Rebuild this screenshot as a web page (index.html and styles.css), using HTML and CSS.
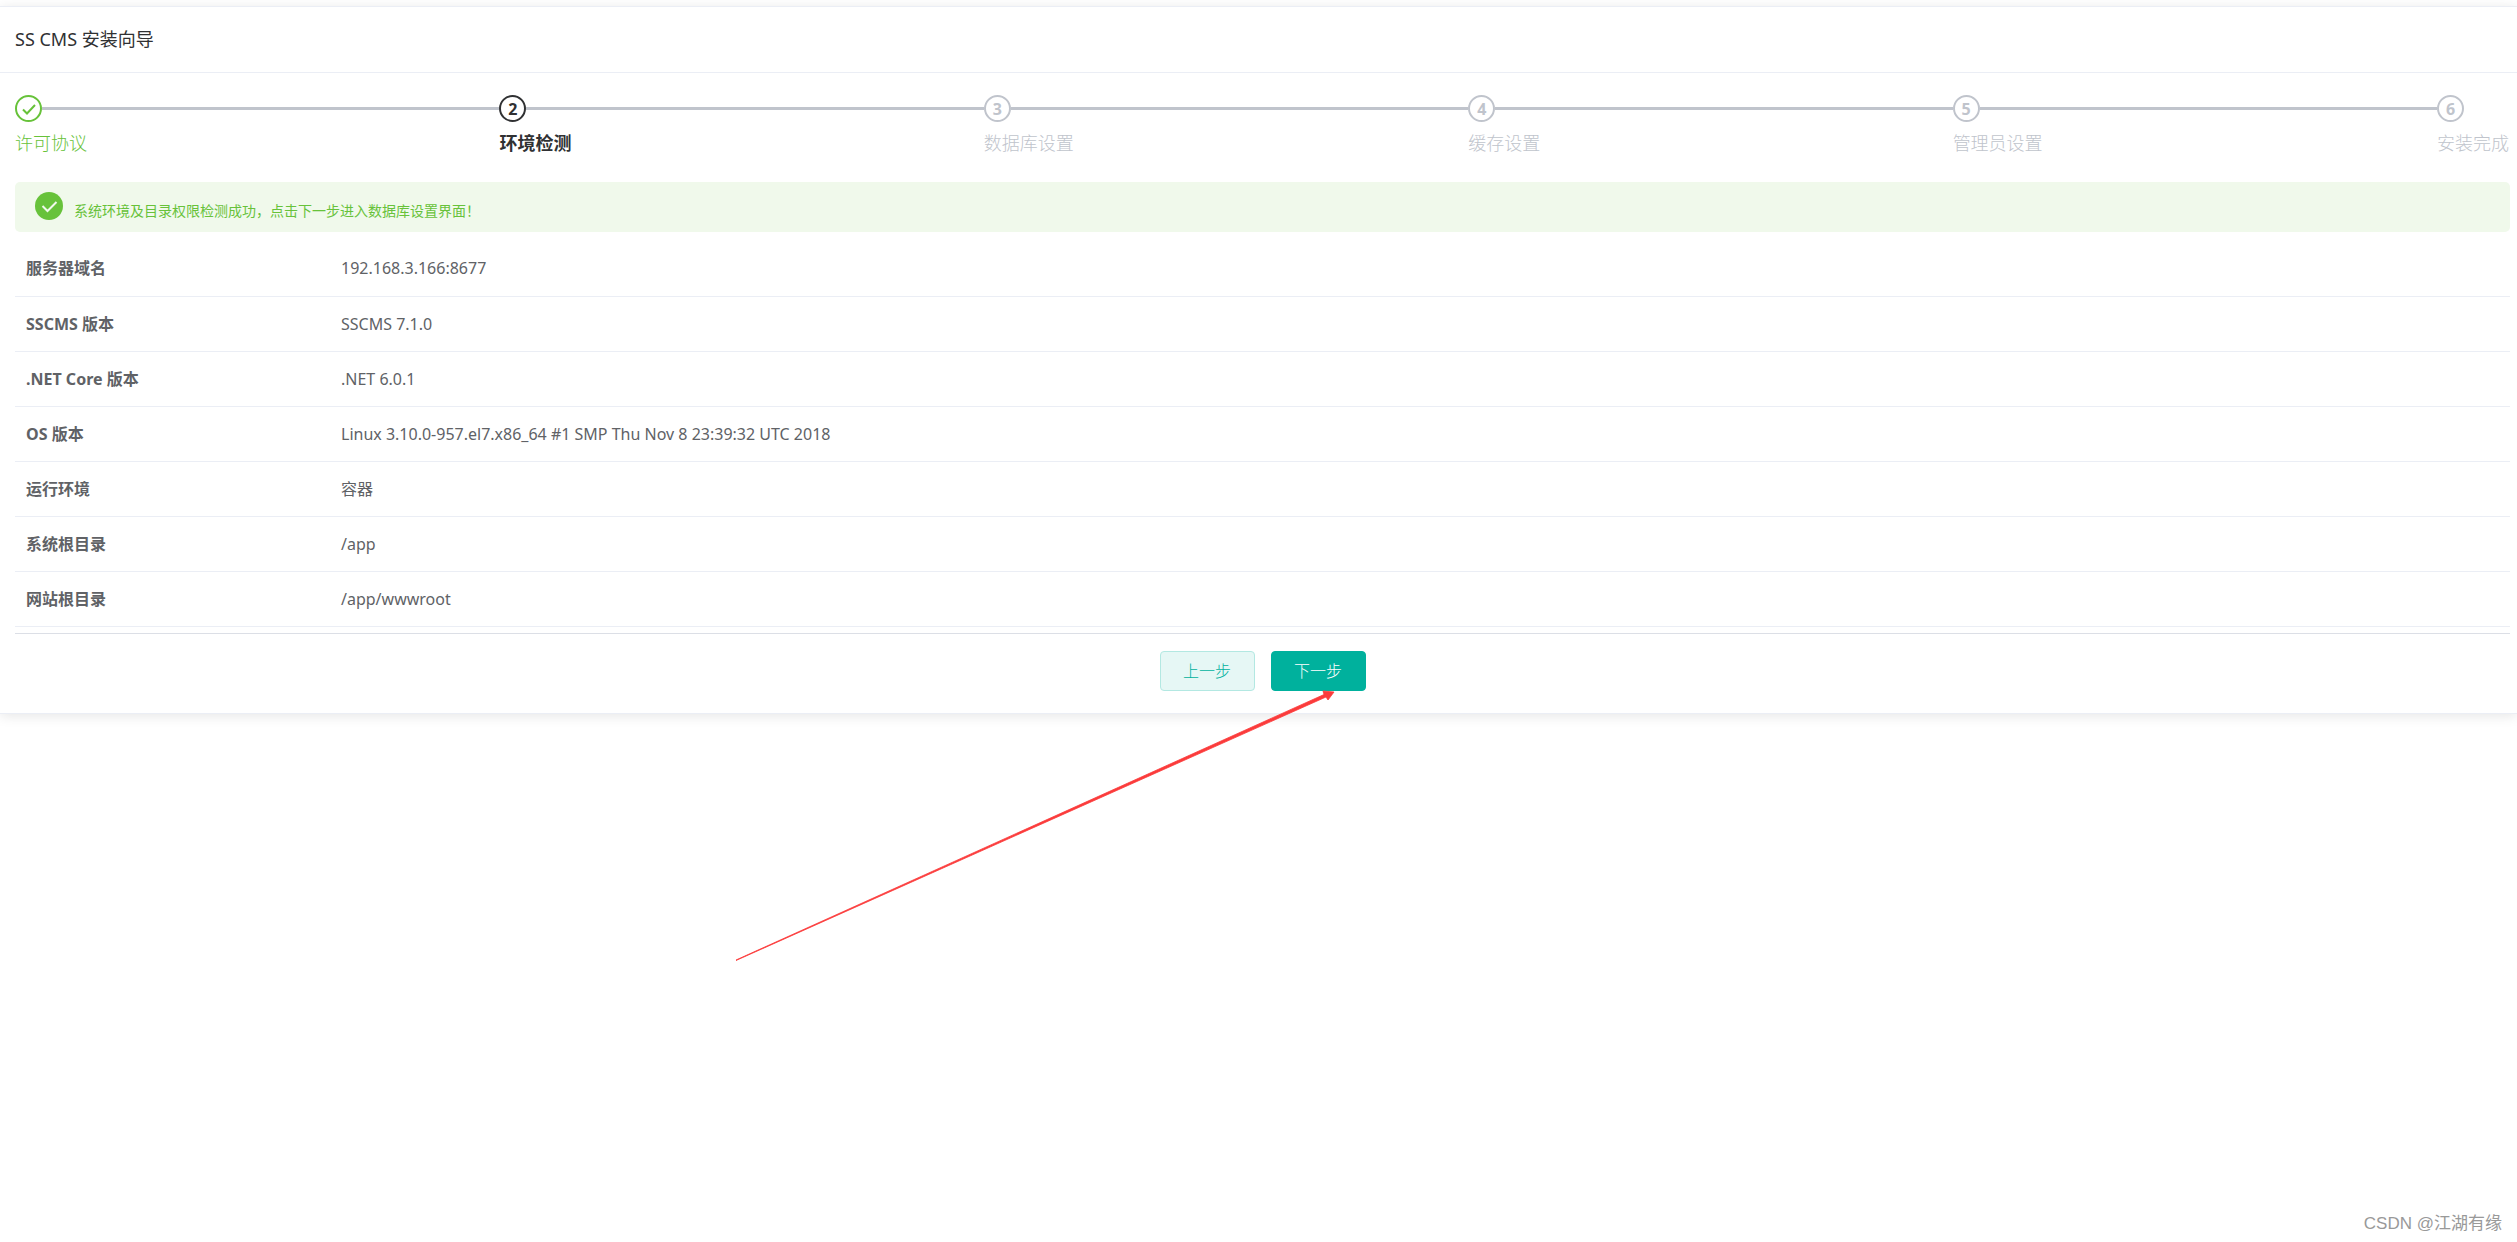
FILE: index.html
```html
<!DOCTYPE html>
<html lang="zh-CN">
<head>
<meta charset="utf-8">
<meta name="viewport" content="width=device-width, initial-scale=1">
<title>SS CMS 安装向导</title>
<link rel="stylesheet" href="styles.css">
</head>
<body>
<main class="card">
  <header class="card-header"><h1 class="card-title">SS CMS 安装向导</h1></header>
  <div class="card-body">
    <ol class="steps">
      <li class="step is-success">
        <div class="step-head"><span class="step-icon"><svg viewBox="0 0 24 24" width="24" height="24" aria-hidden="true"><path d="M6 12.500 10 16.500 18 8" fill="none" stroke="currentColor" stroke-width="2"/></svg></span></div>
        <div class="step-title">许可协议</div>
      </li>
      <li class="step is-process">
        <div class="step-head"><span class="step-icon">2</span></div>
        <div class="step-title">环境检测</div>
      </li>
      <li class="step">
        <div class="step-head"><span class="step-icon">3</span></div>
        <div class="step-title">数据库设置</div>
      </li>
      <li class="step">
        <div class="step-head"><span class="step-icon">4</span></div>
        <div class="step-title">缓存设置</div>
      </li>
      <li class="step">
        <div class="step-head"><span class="step-icon">5</span></div>
        <div class="step-title">管理员设置</div>
      </li>
      <li class="step">
        <div class="step-head"><span class="step-icon">6</span></div>
        <div class="step-title">安装完成</div>
      </li>
    </ol>

    <div class="alert" role="status">
      <svg class="alert-icon" viewBox="0 0 28 28" width="28" height="28" aria-hidden="true"><circle cx="14" cy="14" r="14" fill="currentColor"/><path d="M7.500 14 12.500 19 21.500 10" fill="none" stroke="#f0f9eb" stroke-width="2"/></svg>
      <p class="alert-text">系统环境及目录权限检测成功，点击下一步进入数据库设置界面！</p>
    </div>

    <table class="info">
      <tbody>
        <tr><th scope="row">服务器域名</th><td>192.168.3.166:8677</td></tr>
        <tr><th scope="row">SSCMS 版本</th><td>SSCMS 7.1.0</td></tr>
        <tr><th scope="row">.NET Core 版本</th><td>.NET 6.0.1</td></tr>
        <tr><th scope="row">OS 版本</th><td>Linux 3.10.0-957.el7.x86_64 #1 SMP Thu Nov 8 23:39:32 UTC 2018</td></tr>
        <tr><th scope="row">运行环境</th><td>容器</td></tr>
        <tr><th scope="row">系统根目录</th><td>/app</td></tr>
        <tr><th scope="row">网站根目录</th><td>/app/wwwroot</td></tr>
      </tbody>
    </table>

    <div class="actions">
      <button type="button" class="btn btn-plain">上一步</button>
      <button type="button" class="btn btn-primary">下一步</button>
    </div>
  </div>
</main>

<svg class="arrow" width="600" height="274" viewBox="0 0 600 274" aria-hidden="true">
  <path d="M0 272 588 6.500 587 3 598 4 592 12 590 9 0 272.500Z" fill="#fb3b3b" stroke="#fb3b3b" stroke-width="0.800" stroke-linejoin="round"/>
</svg>
<div class="watermark">CSDN @江湖有缘</div>
</body>
</html>
```

FILE: styles.css
```css
* {
  box-sizing: border-box;
}

body {
  position: relative;
  min-height: 100vh;
  margin: 0;
  padding-top: 6px;
  overflow-x: hidden;
  background: #fff;
  color: #303133;
  font-family: "Noto Sans", "Noto Sans CJK SC", sans-serif;
  font-size: 16px;
  line-height: 24px;
}

.card {
  border-top: 1px solid #ebeef5;
  border-bottom: 1px solid #ebeef5;
  background: #fff;
  box-shadow: 0 2px 12px rgba(0, 0, 0, 0.1);
}

.card-header {
  padding: 20px 15px;
  border-bottom: 1px solid #ebeef5;
}

.card-title {
  margin: 0;
  font-size: 18px;
  font-weight: 400;
  line-height: 25px;
}

.card-body {
  padding: 22px 7px 22px 15px;
}

.steps {
  display: flex;
  margin: 0;
  padding: 0;
  list-style: none;
}

.step {
  flex: 1;
  color: #c0c4cc;
}

.step:last-child {
  flex: none;
  min-width: 73px;
}

.step-head {
  display: flex;
  align-items: center;
}

.step:not(:last-child) .step-head::after {
  content: "";
  flex: 1;
  height: 3px;
  background: #c0c4cc;
}

.step-icon {
  display: flex;
  align-items: center;
  justify-content: center;
  width: 27px;
  height: 27px;
  border: 2px solid currentColor;
  border-radius: 50%;
  background: #fff;
  font-weight: 700;
  line-height: 20px;
}

.step-icon svg {
  flex: none;
}

.step-title {
  margin-top: 2px;
  font-size: 18px;
  font-weight: 300;
  line-height: 38px;
}

.is-success {
  color: #67c23a;
}

.is-process {
  color: #303133;
}

.is-process .step-title {
  font-weight: 700;
}

.alert {
  display: flex;
  gap: 11px;
  margin-top: 20px;
  padding: 10px 20px;
  border-radius: 5px;
  background: #f0f9eb;
  color: #67c23a;
}

.alert-icon {
  flex: none;
  margin-bottom: 2px;
}

.alert-text {
  align-self: flex-end;
  margin: 0;
  font-size: 14px;
  line-height: 22px;
}

.info {
  width: 100%;
  margin-top: 9px;
  border-collapse: collapse;
  color: #606266;
  text-align: left;
}

.info th,
.info td {
  height: 55px;
  padding: 0 11px;
  border-bottom: 1px solid #ebeef5;
}

.info th {
  width: 315px;
}

.actions {
  display: flex;
  justify-content: center;
  gap: 16px;
  margin-top: 6px;
  padding-top: 17px;
  border-top: 1px solid #dcdfe6;
}

.btn {
  min-width: 95px;
  height: 40px;
  padding: 0 22px;
  border: 1px solid #00b19d;
  border-radius: 4px;
  font: inherit;
  font-weight: 300;
}

.btn-plain {
  border-color: #b3e8e2;
  background: #e6f7f5;
  color: #00b19d;
}

.btn-primary {
  background: #00b19d;
  color: #fff;
}

/* Pointer drawn over the page, ending at the next button */
.arrow {
  position: absolute;
  top: 688px;
  left: 736px;
}

.watermark {
  position: absolute;
  right: 15px;
  bottom: 6px;
  color: #999;
  font-family: "Liberation Sans", "Noto Sans CJK SC", sans-serif;
  font-size: 17px;
}
```
